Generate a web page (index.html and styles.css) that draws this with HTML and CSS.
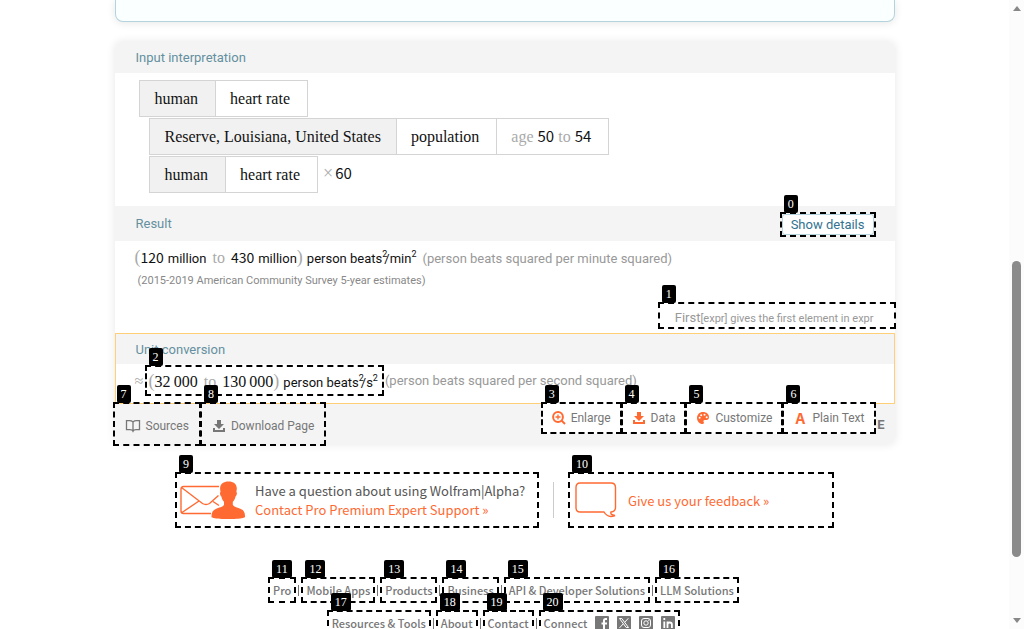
FILE: index.html
```
<!DOCTYPE html>
<html lang="en">
<head>
<meta charset="utf-8">
<title>Wolfram|Alpha</title>
<link rel="stylesheet" href="styles.css">
</head>
<body>
<main class="page">
  <div class="notice"></div>
  <div class="results">
    <section class="pod">
      <header class="pod-head"><h2>Input interpretation</h2></header>
      <div class="pod-body interpretation">
        <div class="cells"><span class="cell shade">human</span><span class="cell">heart rate</span></div>
        <div class="cells indent"><span class="cell shade long">Reserve, Louisiana, United States</span><span class="cell">population</span><span class="cell"><span class="dim">age</span> <span class="num">50</span> <span class="dim">to</span> <span class="num">54</span></span></div>
        <div class="times-row indent">
          <div class="cells"><span class="cell shade">human</span><span class="cell">heart rate</span></div>
          <span class="factor"><span class="dim">×</span><span class="num">60</span></span>
        </div>
      </div>
    </section>
    <section class="pod">
      <header class="pod-head tall"><h2>Result</h2><button class="marked details"><span class="tag">0</span><span class="details-face">Show details</span></button></header>
      <div class="pod-body result">
        <p class="value"><span class="paren">(</span><span class="num">120</span><span class="unit">million</span><span class="to">to</span><span class="num">430</span><span class="unit">million</span><span class="paren">)</span><span class="unit">person beats<sup class="over">2</sup>/min<sup>2</sup></span><span class="caption">(person beats squared per minute squared)</span></p>
        <p class="source">(2015-2019 American Community Survey 5-year estimates)</p>
        <a class="marked hint" href="#"><span class="tag">1</span><span class="hint-lead">First</span>[expr] gives the first element in expr</a>
      </div>
    </section>
    <section class="pod active">
      <header class="pod-head"><h2>Unit conversion</h2></header>
      <div class="pod-body conversion">
        <span class="approx">≈</span>
        <button class="marked value copy"><span class="tag">2</span><span class="paren">(</span><span class="serif-num">32&#8201;000</span><span class="to">to</span><span class="serif-num">130&#8201;000</span><span class="paren">)</span><span class="unit">person beats<sup class="over">2</sup>/s<sup>2</sup></span></button>
        <span class="caption">(person beats squared per second squared)</span>
      </div>
      <div class="toolbar">
        <button class="marked tool"><span class="tag">3</span><svg width="14" height="14" viewBox="0 0 14 14" fill="none" stroke="#ff6a32" stroke-width="2"><circle cx="6" cy="6" r="4.9"/><path d="M9.5 9.5l3.5 3.5"/><path d="M3.5 6h5M6 3.500v5" stroke-width="1.300"/></svg>Enlarge</button>
        <button class="marked tool"><span class="tag">4</span><svg width="14" height="14" viewBox="0 0 14 14" fill="#ff6a32"><path d="M5 1h4v4h3L7 10 2 5h3zM1 9h2v2h8V9h2v4H1z"/></svg>Data</button>
        <button class="marked tool"><span class="tag">5</span><svg width="14" height="14" viewBox="0 0 14 14"><path fill="#ff6a32" d="M7 1C3.500 1 1 3.700 1 7s2.500 6 5.500 6c1.500 0 1.700-1.300 1.100-2.200-.6-1 .1-1.900 1.200-1.900h1.700c1.500 0 2.500-1.200 2.500-2.700C13 3.200 10.500 1 7 1z"/><g fill="#fff"><circle cx="3.600" cy="6.800" r="1"/><circle cx="5.200" cy="4.200" r="1"/><circle cx="8.500" cy="3.800" r="1"/><circle cx="10.700" cy="6.300" r="1"/></g></svg>Customize</button>
        <button class="marked tool"><span class="tag">6</span><span class="letter-icon">A</span>Plain Text</button>
      </div>
    </section>
    <footer class="results-foot">
      <button class="marked foot-link sources"><span class="tag">7</span><svg width="16" height="14" viewBox="0 0 16 14" fill="none" stroke="#777" stroke-width="1.300"><path d="M8 3C7 2 6 1.700 4.500 1.700H1.500v9h3.500c1.500 0 2.500.5 3 1.600.5-1.100 1.500-1.600 3-1.600h3.500v-9h-3C10 1.700 9 2 8 3zM8 3v9"/></svg>Sources</button>
      <button class="marked foot-link download"><span class="tag">8</span><svg width="14" height="14" viewBox="0 0 14 14" fill="#777"><path d="M5 1h4v4h3L7 10 2 5h3zM1 9h2v2h8V9h2v4H1z"/></svg>Download Page</button>
      <span class="powered">E</span>
    </footer>
  </div>

  <div class="support">
    <a class="marked help contact" href="#"><span class="tag">9</span>
      <svg width="65" height="38" viewBox="0 0 65 38"><g fill="none" stroke="#ff6a32" stroke-width="1.400"><path d="M39 5.500H3.500Q1 5.500 1 8v22q0 2.500 2.500 2.500H31M1.500 6.500l21 16q3.500 2 7 0l9-8M2 31.500l17-11.500M33 20.500l6 4"/></g><path fill="#ff6a32" d="M48.500.5c5 0 8.300 2.500 8.300 7 0 1.500-.4 2.500-.4 3.500 1 .5.400 3.500-.9 4.500-.5 2.500-1.300 4-2.700 5.200v3.300c1.200 1.700 5 2.700 8 4 3.400 1.300 4.300 4 4.200 8.200-5 2.500-28.500 2.500-33.500 0-.1-4.200 1-6.900 4.200-8.200 3-1.300 7.300-2.300 8.300-4v-3.300c-1.300-1.200-2.200-2.700-2.600-5.200-1.300-1-1.900-4-.9-4.500 0-1-.4-2-.4-3.500 0-4.500 3.400-7 8.400-7z"/></svg>
      <span class="help-text"><span class="question">Have a question about using Wolfram|Alpha?</span><span>Contact Pro Premium Expert Support »</span></span></a>
    <span class="rule"></span>
    <a class="marked help feedback" href="#"><span class="tag">10</span>
      <svg width="42" height="36" viewBox="0 0 42 36" fill="none" stroke="#ff6a32" stroke-width="1.400"><path d="M5 1h31q4.500 0 4.500 4.500v20q0 4-4.500 4.500-1 3 4 3.500-7 3-11-3.500H5q-4 0-4-4.500v-20Q1 1 5 1z"/></svg>
      <span>Give us your feedback »</span></a>
  </div>

  <nav class="links">
    <div class="links-row"><a class="marked" href="#"><span class="tag">11</span>Pro</a><i></i><a class="marked" href="#"><span class="tag">12</span>Mobile Apps</a><i></i><a class="marked" href="#"><span class="tag">13</span>Products</a><i></i><a class="marked" href="#"><span class="tag">14</span>Business</a><i></i><a class="marked" href="#"><span class="tag">15</span>API &amp; Developer Solutions</a><i></i><a class="marked" href="#"><span class="tag">16</span>LLM Solutions</a></div>
    <div class="links-row"><a class="marked" href="#"><span class="tag">17</span>Resources &amp; Tools</a><i></i><a class="marked" href="#"><span class="tag">18</span>About</a><i></i><a class="marked" href="#"><span class="tag">19</span>Contact</a><i></i><a class="marked connect" href="#"><span class="tag">20</span>Connect
      <svg width="14" height="14" viewBox="0 0 14 14"><rect width="14" height="14" rx="1" fill="#777"/><path d="M12 3H10.500Q9 3 9 4.500V14M6.500 7.500H12" fill="none" stroke="#fff" stroke-width="2"/></svg>
      <svg width="14" height="14" viewBox="0 0 14 14"><rect width="14" height="14" rx="1" fill="#777"/><path d="M2.500 2.500h2.300l6.700 9H9.200zM11.300 2.300L7.800 6.200M6.200 7.900l-3.700 4" fill="none" stroke="#fff"/></svg>
      <svg width="14" height="14" viewBox="0 0 14 14"><rect width="14" height="14" rx="1" fill="#777"/><rect x="2.500" y="2.500" width="9" height="9" rx="2.500" fill="none" stroke="#fff"/><circle cx="7" cy="7" r="2.200" fill="none" stroke="#fff"/><circle cx="9.800" cy="4.200" r=".6" fill="#fff"/></svg>
      <svg width="14" height="14" viewBox="0 0 14 14"><rect width="14" height="14" rx="1" fill="#777"/><path d="M3.300 5.500V12M3.300 2v2M6.500 5.500V12M6.500 8.500q0-2 2.200-2t2.200 2V12" fill="none" stroke="#fff" stroke-width="1.800"/></svg></a></div>
  </nav>
</main>
<div class="scrollbar"><span class="arrow up"></span><span class="thumb"></span><span class="arrow down"></span></div>
</body>
</html>
```
FILE: styles.css
```
* { box-sizing: border-box; }
html { height: 100%; overflow: hidden; }
body { margin: 0; padding-right: 15px; background: #fff; font-family: Roboto, sans-serif; font-size: 13px; color: #111; }
h2, p { margin: 0; font-weight: 400; }
button { margin: 0; padding: 0; background: none; border: 0; font: inherit; color: inherit; cursor: pointer; }
a { color: inherit; text-decoration: none; }
svg { flex: none; display: block; }

.page { max-width: 780px; margin: 0 auto; }

/* Numbered keyboard hints */
.marked { position: relative; border: 2px dashed #000; }
.tag { position: absolute; z-index: 5; left: 2px; top: -19px; height: 18px; padding: 0 4px; border-radius: 2px; background: #000; color: #fff; font: 12px/18px "Liberation Serif", serif; }

.notice { height: 22px; background: #faffff; border: 1px solid #b4d3dc; border-top: 0; border-radius: 0 0 8px 8px; box-shadow: 0 1px 8px rgba(0,0,0,.1); }

.results { margin-top: 20px; border-radius: 6px; box-shadow: 0 0 10px rgba(0,0,0,.1); }
.pod { position: relative; background: #fff; border-radius: 6px 6px 0 0; }
.pod-head { display: flex; align-items: center; justify-content: space-between; height: 31px; padding: 1px 19px 0 21px; background: #f4f4f4; border-radius: 6px 6px 0 0; }
.pod-head.tall { height: 35px; border-radius: 0; }
.pod-head h2 { font-size: 13px; line-height: 20px; color: #64909f; }

.interpretation { padding: 7px 24px 12px; font: 16px/35px "Liberation Serif", serif; }
.cells { display: flex; width: max-content; height: 37px; margin-bottom: 1px; border: 1px solid #d4d4d4; }
.cell { padding: 0 17px 0 15px; }
.cell + .cell { padding-left: 14px; border-left: 1px solid #d4d4d4; }
.cell.long { padding-right: 15px; }
.shade { background: #f1f1f1; }
.indent { margin-left: 10px; }
.dim { color: #aaa; }
.num { font-family: "Noto Sans CJK SC", sans-serif; font-size: 15px; line-height: 20px; }
.times-row { display: flex; align-items: flex-start; gap: 5px; }
.factor { display: flex; align-items: baseline; gap: 2px; }
.factor .dim { font-size: 18px; }

.details { color: #34728f; font-size: 13px; }
.details-face { display: block; padding: 0 8px; line-height: 19px; background: #fff; border: 1px solid #b4d3dc; border-radius: 3px; }

.result { display: flex; flex-direction: column; height: 92px; padding-left: 20px; }
.value { display: flex; align-items: baseline; white-space: nowrap; }
.result .value { height: 33px; padding-top: 6px; }
.paren { color: #aaa; font: 18px/20px "Liberation Serif", serif; }
.value .num { font-size: 14px; }
.unit { margin-left: 4px; }
.to { margin: 0 6px; color: #aaa; font: 16px/20px "Liberation Serif", serif; }
.serif-num { font: 16px/20px "Liberation Serif", serif; }
sup { font-size: 9px; line-height: 0; vertical-align: 6px; }
.over { margin-right: -3px; }
.caption { color: #999; white-space: nowrap; }
.value .caption { margin-left: 6px; }
.source { padding: 0 3px; font-size: 11px; line-height: 13px; color: #888; }
.hint { align-self: flex-end; margin: auto -1px 4px 0; padding: 5px 20px 0 15px; font-size: 11px; line-height: 17px; color: #999; }
.hint-lead { font-size: 13px; }

.active { border: 1px solid #ffd077; border-radius: 0; }
.active .pod-head { height: 30px; padding-left: 20px; border-radius: 0; }
.conversion { display: flex; align-items: center; height: 39px; padding: 0 0 6px 19px; }
.approx { width: 10px; color: #aaa; font: 16px/20px "Liberation Serif", serif; }
.copy { height: 31px; margin-right: 1px; padding: 4px 4px 0 2px; }
.toolbar { position: absolute; z-index: 4; right: 18px; top: 68px; display: flex; background: #fff; color: #777; font-size: 12px; }
.tool { display: flex; align-items: center; height: 32px; gap: 5px; padding: 0 9px; }
.tool + .tool { margin-left: -1px; }
.letter-icon { width: 14px; color: #ff6a32; font: bold 15px/18px "Noto Sans CJK SC", sans-serif; text-align: center; }

.results-foot { display: flex; height: 40px; background: #f4f4f4; border-radius: 0 0 6px 6px; color: #777; font-size: 12px; }
.foot-link { display: flex; align-items: center; gap: 5px; height: 44px; margin-top: -2px; padding: 4px 10px 0; }
.sources { margin-left: -2px; }
.download { margin-left: -1px; }
.powered { margin: auto 10px auto auto; font-size: 13px; font-weight: 700; }

.support { display: flex; align-items: center; justify-content: space-between; width: 659px; max-width: 100%; margin: 28px auto 0; font-family: "Noto Sans CJK SC", sans-serif; font-size: 13px; line-height: 19px; color: #ff6a32; }
.help { display: flex; align-items: center; height: 56px; }
.contact { gap: 10px; width: 364px; padding-left: 3px; }
.help-text { display: flex; flex-direction: column; white-space: nowrap; }
.question { color: #555; }
.rule { width: 1px; height: 36px; background: #ccc; }
.feedback { gap: 11px; width: 266px; padding-left: 5px; }

.links { margin-top: 49px; color: #777; font: 500 11px/22px "Noto Sans CJK SC", sans-serif; }
.links-row { display: flex; justify-content: center; align-items: center; margin: 0 2px 7px 0; }
.links a { padding: 0 3px; white-space: nowrap; }
.links i { width: 1px; height: 11px; margin: 0 2px; background: #777; }
.links .connect { display: flex; align-items: center; gap: 8px; }

.scrollbar { position: fixed; top: 0; right: 0; bottom: 0; width: 15px; background: #fcfcfc; display: flex; flex-direction: column; align-items: center; }
.arrow { border: 4px solid transparent; }
.up { margin-top: 6px; border-bottom: 5px solid #888; border-top: 0; }
.down { margin: auto 0 6px; border-top: 5px solid #888; border-bottom: 0; }
.thumb { width: 9px; height: 47vh; margin-top: 250px; border-radius: 5px; background: #8b8b8b; }
```
